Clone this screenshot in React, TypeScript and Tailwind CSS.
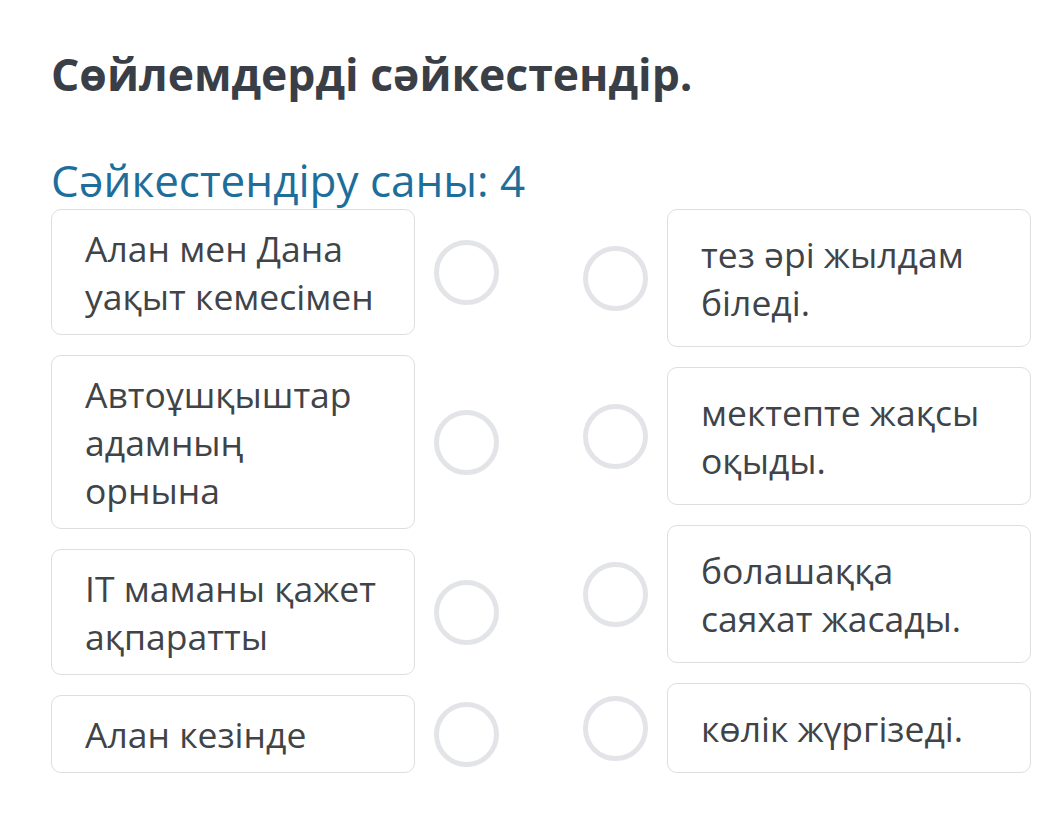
import React from 'react';

// each entry is the list of lines as they wrap in the card
const leftItems = [
  ['Алан мен Дана', 'уақыт кемесімен'],
  ['Автоұшқыштар', 'адамның', 'орнына'],
  ['IT маманы қажет', 'ақпаратты'],
  ['Алан кезінде'],
];

const rightItems = [
  ['тез әрі жылдам', 'біледі.'],
  ['мектепте жақсы', 'оқыды.'],
  ['болашаққа', 'саяхат жасады.'],
  ['көлік жүргізеді.'],
];

const Dot = () => (
  <div className="w-[65px] h-[65px] shrink-0 rounded-full border-[5px] border-[#e2e4e7] bg-white" />
);

const Lines = ({ lines }: { lines: string[] }) => (
  <>
    {lines.map((line, i) => (
      <div key={i} className="whitespace-nowrap">
        {line}
      </div>
    ))}
  </>
);

const App = () => {
  return (
    <div
      className="w-[1057px] h-[815px] bg-white px-[51px] pt-[44px] text-[#404448]"
      style={{ fontFamily: '"Open Sans", "Noto Sans", sans-serif' }}
    >
      <h1 className="text-[44.5px] font-bold leading-[60px] text-[#3a3f47]">Сөйлемдерді сәйкестендір.</h1>

      <h2 className="mt-[50px] text-[44px] leading-[52px] text-[#1d6e9b]">Сәйкестендіру саны: 4</h2>

      <div className="mt-[3px] flex gap-[84px]">
        {/* Left column */}
        <div className="flex flex-col gap-5">
          {leftItems.map((lines, i) => (
            <div key={i} className="flex items-center gap-[19px]">
              <div className="w-[364px] rounded-[10px] border border-[#dedede] bg-white pl-[33px] pr-5 py-[14px] text-[35.5px] leading-[48px]">
                <Lines lines={lines} />
              </div>
              <Dot />
            </div>
          ))}
        </div>

        {/* Right column */}
        <div className="flex flex-col gap-5">
          {rightItems.map((lines, i) => (
            <div key={i} className="flex items-center gap-[19px]">
              <Dot />
              <div className="w-[364px] rounded-[10px] border border-[#dedede] bg-white pl-[33px] pr-5 py-5 text-[35.5px] leading-[48px]">
                <Lines lines={lines} />
              </div>
            </div>
          ))}
        </div>
      </div>
    </div>
  );
};

export default App;
